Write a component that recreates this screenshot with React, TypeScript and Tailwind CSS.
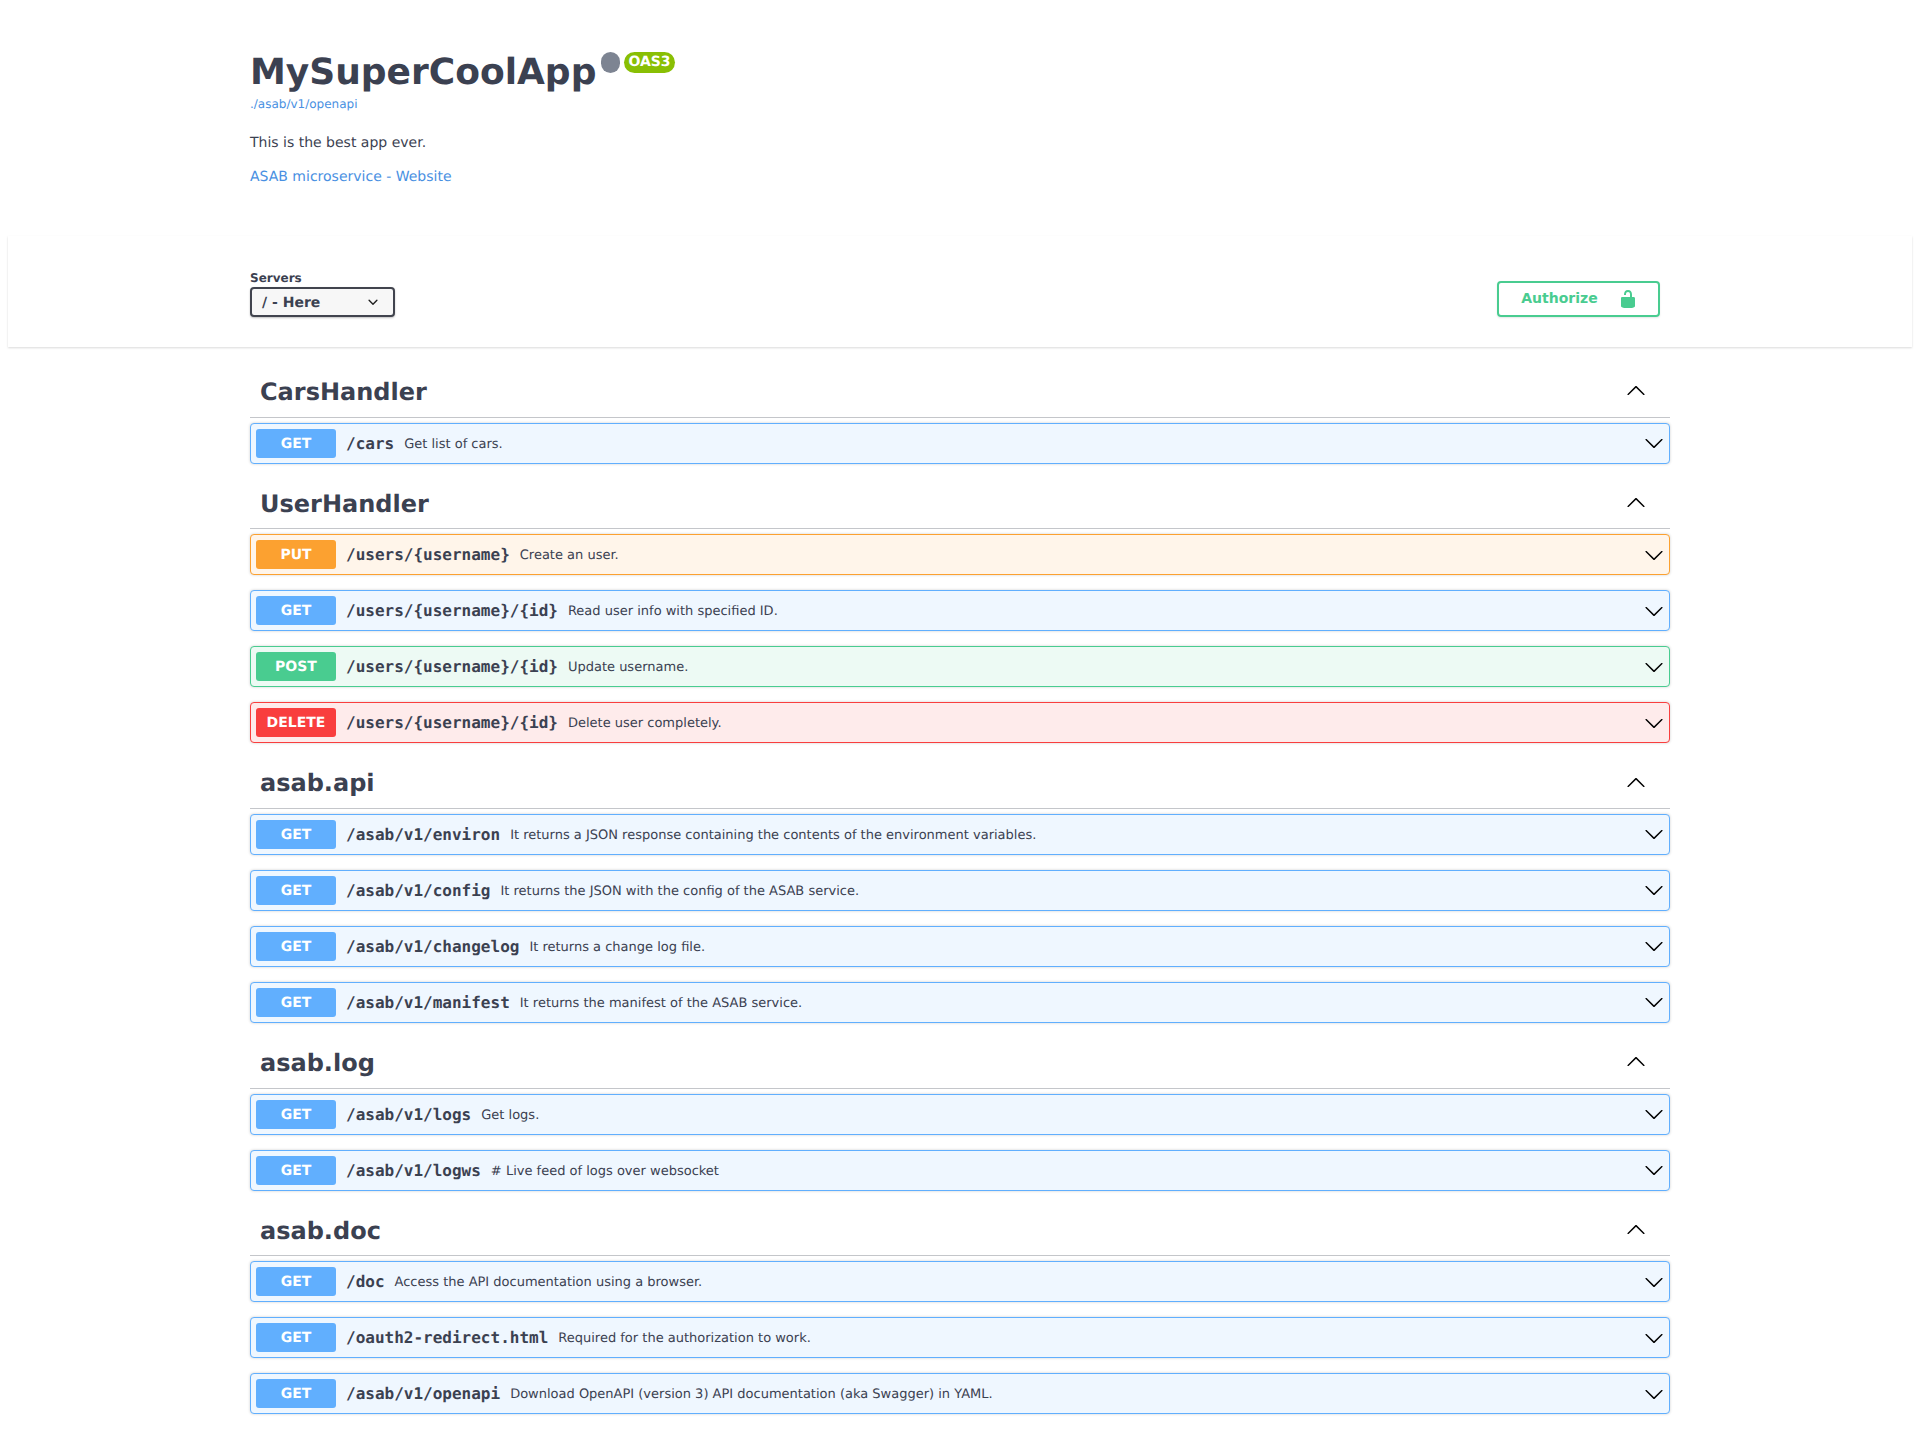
const sans = "font-['DejaVu_Sans',sans-serif] [text-rendering:geometricPrecision]";

type Method = "GET" | "PUT" | "POST" | "DELETE";

const methodStyles: Record<Method, { box: string; badge: string }> = {
  GET: { box: "border-[#61affe] bg-[#eff7ff]", badge: "bg-[#61affe]" },
  PUT: { box: "border-[#fca130] bg-[#fff5ea]", badge: "bg-[#fca130]" },
  POST: { box: "border-[#49cc90] bg-[#edfaf4]", badge: "bg-[#49cc90]" },
  DELETE: { box: "border-[#f93e3e] bg-[#feebeb]", badge: "bg-[#f93e3e]" },
};

const sections: { name: string; ops: [Method, string, string][] }[] = [
  { name: "CarsHandler", ops: [["GET", "/cars", "Get list of cars."]] },
  {
    name: "UserHandler",
    ops: [
      ["PUT", "/users/{username}", "Create an user."],
      ["GET", "/users/{username}/{id}", "Read user info with specified ID."],
      ["POST", "/users/{username}/{id}", "Update username."],
      ["DELETE", "/users/{username}/{id}", "Delete user completely."],
    ],
  },
  {
    name: "asab.api",
    ops: [
      ["GET", "/asab/v1/environ", "It returns a JSON response containing the contents of the environment variables."],
      ["GET", "/asab/v1/config", "It returns the JSON with the config of the ASAB service."],
      ["GET", "/asab/v1/changelog", "It returns a change log file."],
      ["GET", "/asab/v1/manifest", "It returns the manifest of the ASAB service."],
    ],
  },
  {
    name: "asab.log",
    ops: [
      ["GET", "/asab/v1/logs", "Get logs."],
      ["GET", "/asab/v1/logws", "# Live feed of logs over websocket"],
    ],
  },
  {
    name: "asab.doc",
    ops: [
      ["GET", "/doc", "Access the API documentation using a browser."],
      ["GET", "/oauth2-redirect.html", "Required for the authorization to work."],
      ["GET", "/asab/v1/openapi", "Download OpenAPI (version 3) API documentation (aka Swagger) in YAML."],
    ],
  },
];

function Arrow({ up }: { up?: boolean }) {
  return (
    <svg viewBox="0 0 20 20" className={up ? "mb-[3px] h-5 w-5 rotate-180 fill-black" : "h-5 w-5 fill-black"}>
      <path d="M17.418 6.109c.272-.268.709-.268.979 0s.271.701 0 .969l-7.908 7.83c-.27.268-.707.268-.979 0l-7.908-7.83c-.27-.268-.27-.701 0-.969.271-.268.709-.268.979 0L10 13.25l7.418-7.141z" />
    </svg>
  );
}

function Operation({ method, path, text }: { method: Method; path: string; text: string }) {
  const style = methodStyles[method];
  return (
    <div className={`mb-[15px] flex items-center rounded border p-[5px] shadow-[0_0_3px_rgba(0,0,0,0.19)] ${style.box}`}>
      <div className={`w-20 rounded-[3px] pt-[7px] pb-[5px] text-center text-sm font-bold leading-[17px] text-white ${style.badge}`}>{method}</div>
      <span className="px-2.5 font-['DejaVu_Sans_Mono',monospace] text-base font-bold leading-[19px] text-[#3b4151]">{path}</span>
      <span className="flex-1 pt-[2px] text-[13px] leading-[19px] text-[#3b4151]">{text}</span>
      <Arrow />
    </div>
  );
}

export default function App() {
  return (
    <div className={`${sans} min-h-[1437px] bg-white px-2 text-[#3b4151]`}>
      <div className="mx-auto w-[1420px]">
        <div className="pt-[50px]">
          <div className="mb-[2px] flex items-start">
            <h1 className="text-4xl font-bold leading-[45px]">MySuperCoolApp</h1>
            <div className="mt-[2px] ml-[5px] h-[21px] w-[19px] rounded-full bg-[#7d8492]" />
            <div className="mt-[2px] ml-1 rounded-full bg-[#89bf04] px-1 text-sm font-bold leading-[21px] text-white">OAS3</div>
          </div>
          <a className="block text-xs leading-[15px] text-[#4990e2]">./asab/v1/openapi</a>
          <p className="mt-[21px] text-sm leading-[21px]">This is the best app ever.</p>
          <a className="mt-[13px] block text-sm leading-[21px] text-[#4990e2]">ASAB microservice - Website</a>
        </div>
      </div>
      <div className="mt-12 bg-white pt-9 pb-[30px] shadow-[0_1px_2px_0_rgba(0,0,0,0.15)]">
        <div className="mx-auto flex w-[1420px] items-end justify-between">
          <div>
            <div className="pb-[2px] text-xs font-bold leading-[13px]">Servers</div>
            <div className="flex h-[30px] w-[145px] items-center justify-between rounded border-2 border-[#41444e] bg-[#f7f7f7] px-[10px] text-sm font-bold shadow-[0_1px_2px_0_rgba(0,0,0,0.25)]">
              <span className="pt-[2px]">/ - Here</span>
              <svg viewBox="0 0 20 20" className="h-5 w-5 fill-[#1f1f1f]">
                <path d="M13.418 7.859a.695.695 0 0 1 .978 0 .68.68 0 0 1 0 .969l-3.908 3.83a.697.697 0 0 1-.979 0l-3.908-3.83a.68.68 0 0 1 0-.969.695.695 0 0 1 .978 0L10 11.25l3.418-3.391z" />
              </svg>
            </div>
          </div>
          <button type="button" className="mr-[10px] flex h-9 w-[163px] items-center justify-center rounded border-2 border-[#49cc90] pl-[2px] text-sm font-bold text-[#49cc90] shadow-[0_1px_2px_rgba(0,0,0,0.1)]">
            <span className="pr-[20px] pb-[2px]">Authorize</span>
            <svg viewBox="0 0 20 20" className="h-5 w-5 fill-[#49cc90]">
              <path d="M15.8 8H14V5.6C14 2.703 12.665 1 10 1 7.334 1 6 2.703 6 5.6V6h2v-.801C8 3.754 8.797 3 10 3c1.203 0 2 .754 2 2.199V8H4c-.553 0-1 .646-1 1.199V17c0 .549.428 1.139.951 1.307l1.197.387C5.672 18.861 6.55 19 7.1 19h5.8c.549 0 1.428-.139 1.951-.307l1.196-.387c.524-.167.953-.757.953-1.306V9.199C17 8.646 16.352 8 15.8 8z" />
            </svg>
          </button>
        </div>
      </div>
      <div className="mx-auto mt-[20.2px] w-[1420px]">
        {sections.map((section) => (
          <section key={section.name}>
            <div className="mb-[5px] flex items-center border-b border-[rgba(59,65,81,0.3)] pt-[11px] pb-[9px] pr-6 pl-[10px]">
              <h3 className="flex-1 text-2xl font-bold leading-[29.6px]">{section.name}</h3>
              <Arrow up />
            </div>
            {section.ops.map(([method, path, text]) => (
              <Operation key={method + path} method={method} path={path} text={text} />
            ))}
          </section>
        ))}
      </div>
    </div>
  );
}
